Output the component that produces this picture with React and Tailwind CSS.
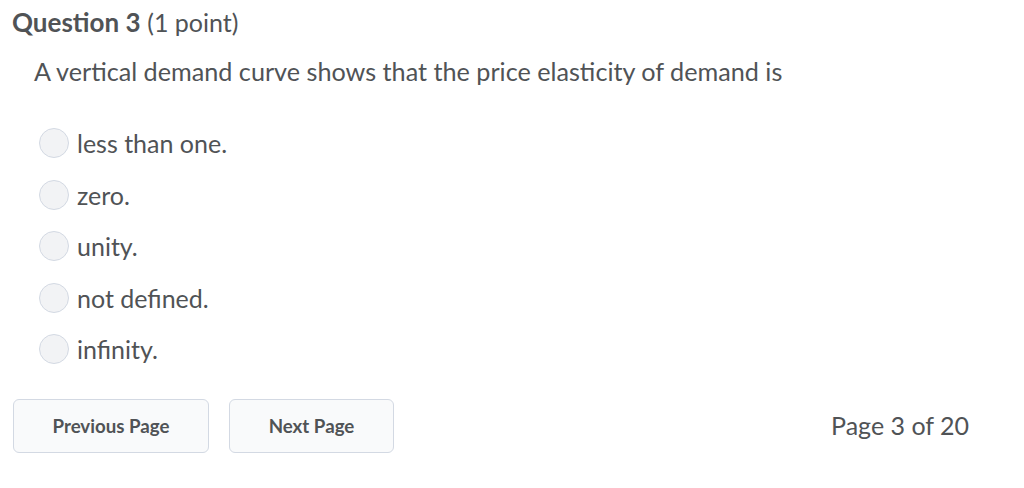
const options = ['less than one.', 'zero.', 'unity.', 'not defined.', 'infinity.'];

export default function App() {
  return (
    <div className="w-[1024px] h-[488px] bg-white text-[#505356]" style={{ fontFamily: 'Lato, "Open Sans", sans-serif' }}>
      <div className="pl-[12px] pt-[4px]">
        <h2 className="text-[26px] leading-[36px]">
          <span className="font-bold">Question 3</span> <span className="text-[25px]">(1 point)</span>
        </h2>
      </div>
      <p className="pl-[34px] mt-[16px] text-[25.2px] leading-[30px]">
        A vertical demand curve shows that the price elasticity of demand is
      </p>
      <div className="mt-[42px] pl-[39px] flex flex-col gap-[21.5px]">
        {options.map((o) => (
          <label key={o} className="flex items-center gap-[8px] h-[30px]">
            <span className="w-[30px] h-[30px] shrink-0 rounded-full border border-[#d3d9e3] bg-[#f2f3f5]" />
            <span className="text-[25px] leading-[30px]">{o}</span>
          </label>
        ))}
      </div>
      <div className="mt-[35px] pl-[13px] pr-[55px] flex items-center">
        <button className="w-[196px] h-[54px] rounded-[6px] border border-[#d3d9e3] bg-[#f9fafb] text-[18.7px] font-bold text-[#505356]">
          Previous Page
        </button>
        <button className="ml-[20px] w-[165px] h-[54px] rounded-[6px] border border-[#d3d9e3] bg-[#f9fafb] text-[18.7px] font-bold text-[#505356]">
          Next Page
        </button>
        <span className="ml-auto text-[25px]">Page 3 of 20</span>
      </div>
    </div>
  );
}
